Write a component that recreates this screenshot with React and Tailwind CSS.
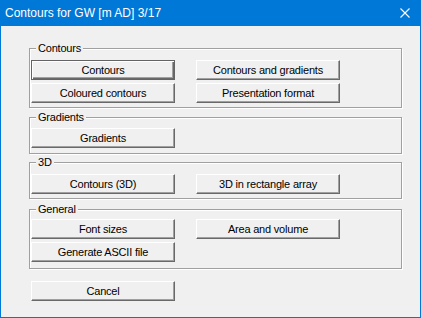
import React from "react";

const groups = [
  {
    title: "Contours",
    box: "mt-0 pt-[11px] pb-[4px]",
    buttons: ["Contours", "Contours and gradients", "Coloured contours", "Presentation format"],
  },
  { title: "Gradients", box: "mt-[9px] pt-[10px] pb-[5px]", buttons: ["Gradients"] },
  {
    title: "3D",
    box: "mt-[8px] pt-[11px] pb-[4px]",
    buttons: ["Contours (3D)", "3D in rectangle array"],
  },
  {
    title: "General",
    box: "mt-[10px] pt-[9px] pb-[6px]",
    buttons: ["Font sizes", "Area and volume", "Generate ASCII file"],
  },
];

function Button({ label, isDefault }) {
  if (isDefault) {
    return (
      <button className="block h-[20px] w-[144px] bg-[#f0f0f0] border border-[#646464] shadow-[inset_1px_1px_0_#ffffff,inset_-1px_-1px_0_#696969,inset_-2px_-2px_0_#a0a0a0] text-[11px] tracking-[-0.2px] text-black leading-none">
        {label}
      </button>
    );
  }
  return (
    <button className="block h-[20px] w-[144px] bg-[#f0f0f0] border border-t-white border-l-white border-r-[#696969] border-b-[#696969] shadow-[inset_-1px_-1px_0_#a0a0a0] text-[11px] tracking-[-0.2px] text-black leading-none">
      {label}
    </button>
  );
}

function Group({ title, box, buttons, first }) {
  return (
    <div
      className={`relative w-[373px] border border-[#a0a0a0] shadow-[1px_1px_0_#ffffff,inset_1px_1px_0_#ffffff] pl-[1px] ${box}`}
    >
      <span className="absolute left-[6px] top-[-7px] px-[2px] bg-[#f0f0f0] text-[11px] leading-[13px] tracking-[-0.2px] text-black">
        {title}
      </span>
      <div className="grid grid-cols-[144px_144px] gap-x-[21px] gap-y-[3px]">
        {buttons.map((b, i) => (
          <Button key={b} label={b} isDefault={first && i === 0} />
        ))}
      </div>
    </div>
  );
}

export default function App() {
  return (
    <div className="w-[421px] h-[318px] flex flex-col bg-[#0078d7] font-['Liberation_Sans',Arial,sans-serif] select-none">
      {/* Title bar */}
      <div className="h-[26px] shrink-0 flex items-center justify-between pl-[5px] pr-[11px] text-white">
        <span className="text-[12px] leading-[26px]">Contours for GW [m AD] 3/17</span>
        <svg width="10" height="10" viewBox="0 0 10 10" className="block">
          <path d="M0.5 0.5 L9.5 9.5 M9.5 0.5 L0.5 9.5" stroke="#ffffff" strokeWidth="1.1" fill="none" />
        </svg>
      </div>

      {/* Body */}
      <div className="flex-1 mx-[1px] mb-[1px] bg-[#f0f0f0] pt-[22px] pl-[28px] flex flex-col">
        {groups.map((g, i) => (
          <Group key={g.title} {...g} first={i === 0} />
        ))}
        <div className="mt-[12px] ml-[2px]">
          <Button label="Cancel" />
        </div>
      </div>
    </div>
  );
}
